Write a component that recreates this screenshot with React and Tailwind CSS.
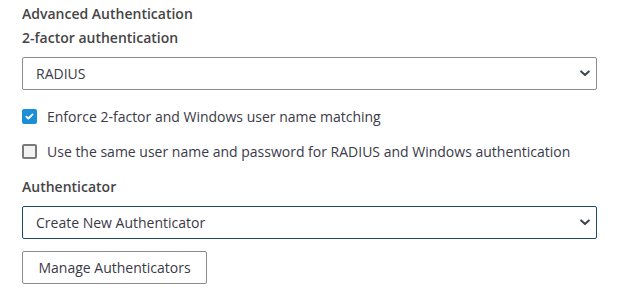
import React from "react";

function Chevron() {
  return (
    <svg width="10" height="7" viewBox="0 0 10 7" className="shrink-0">
      <path d="M1.2 1.4 L5 5 L8.8 1.4" fill="none" stroke="#3d4650" strokeWidth="2" strokeLinecap="round" strokeLinejoin="round" />
    </svg>
  );
}

function Select({ value, focused }) {
  return (
    <div
      className={`flex items-center justify-between h-[33px] w-[575px] rounded-[2px] bg-white pl-[13px] pr-[6px] border ${
        focused ? "border-[#1b4e66]" : "border-[#8c8c8c]"
      }`}
    >
      <span className="text-[14px] text-[#3a3a48]">{value}</span>
      <Chevron />
    </div>
  );
}

export default function App() {
  return (
    <div className="w-[635px] h-[297px] bg-white pl-[22px] font-['Open_Sans',sans-serif] text-[#454545]">
      <div className="pt-[4px] text-[14px] leading-[20px] font-semibold">
        <p>Advanced Authentication</p>
        <p className="mt-[4px]">2-factor authentication</p>
      </div>

      <div className="mt-[9px]">
        <Select value="RADIUS" />
      </div>

      <div className="mt-[16px] flex items-center gap-[10px]">
        <span className="flex items-center justify-center w-[15px] h-[15px] rounded-[2px] bg-[#1a8fd8]">
          <svg width="9" height="7" viewBox="0 0 9 7">
            <path d="M1.3 3.6 L3.4 5.5 L7.6 1.4" fill="none" stroke="white" strokeWidth="1.8" strokeLinecap="round" strokeLinejoin="round" />
          </svg>
        </span>
        <span className="text-[14px] text-[#3a3a48]">Enforce 2-factor and Windows user name matching</span>
      </div>

      <div className="mt-[14px] flex items-center gap-[10px]">
        <span className="w-[15px] h-[15px] rounded-[2px] border-2 border-[#7a7a7a] bg-[#f2f2f2]" />
        <span className="text-[14px] text-[#3a3a48]">
          Use the same user name and password for RADIUS and Windows authentication
        </span>
      </div>

      <p className="mt-[15px] text-[14px] leading-[20px] font-semibold">Authenticator</p>

      <div className="mt-[9px]">
        <Select value="Create New Authenticator" focused />
      </div>

      <button className="mt-[12px] h-[33px] w-[185px] rounded-[2px] border border-[#8c8c8c] bg-white text-[14px] text-[#3a3a48]">
        Manage Authenticators
      </button>
    </div>
  );
}
